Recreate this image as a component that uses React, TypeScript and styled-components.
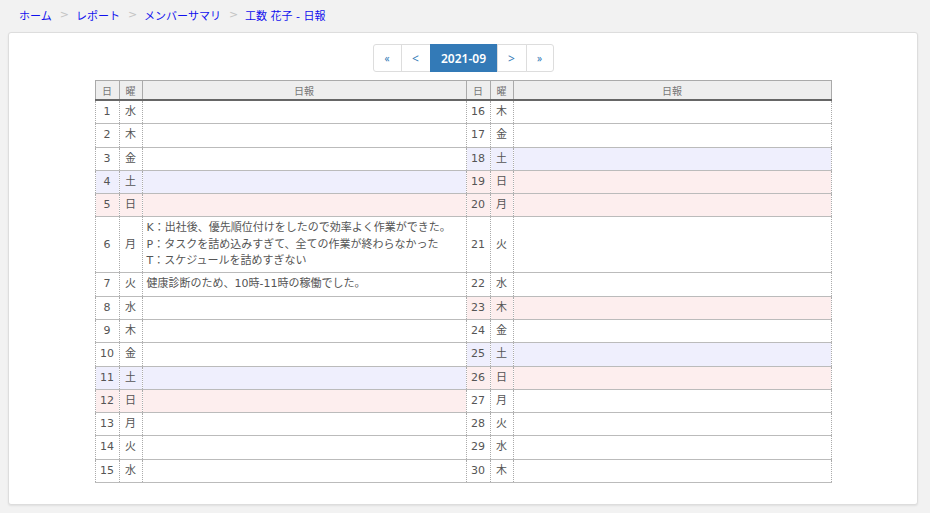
import styled, { createGlobalStyle } from "styled-components";

const GlobalStyle = createGlobalStyle`
  html, body {
    margin: 0;
    padding: 0;
    background: #f2f2f2;
    font-family: "DejaVu Sans", "Noto Sans CJK JP", sans-serif;
    font-size: 11px;
    color: #555;
  }
`;

const Page = styled.div`
  padding: 5px 12px 8px 8px;
`;

const Breadcrumb = styled.ol`
  display: flex;
  align-items: center;
  list-style: none;
  margin: 0 0 8px;
  padding: 0 0 0 11px;
  height: 19px;
  font-family: "DejaVu Sans", "Noto Sans CJK JP", sans-serif;
  font-size: 11px;
`;

const Crumb = styled.li`
  display: flex;
  align-items: center;
  white-space: pre;

  & + &::before {
    content: ">";
    color: #c4c4c4;
    padding: 0 7px 0 8px;
    font-size: 11px;
  }
`;

const CrumbLink = styled.a`
  color: #1010ee;
  text-decoration: none;
`;

const Card = styled.div`
  background: #fff;
  border: 1px solid #ddd;
  border-radius: 3px;
  box-shadow: 0 1px 2px rgba(0, 0, 0, 0.08);
  padding: 11px 0 21px;
  display: flex;
  flex-direction: column;
  align-items: center;
`;

const Pager = styled.div`
  display: flex;
  margin-bottom: 8px;
`;

const PageButton = styled.a<{ $active?: boolean; $w: number; $small?: boolean }>`
  box-sizing: border-box;
  display: flex;
  align-items: center;
  justify-content: center;
  height: 28px;
  width: ${(p) => p.$w}px;
  border: 1px solid ${(p) => (p.$active ? "#337ab7" : "#ddd")};
  margin-left: -1px;
  background: ${(p) => (p.$active ? "#337ab7" : "#fff")};
  color: ${(p) => (p.$active ? "#fff" : "#337ab7")};
  font-size: ${(p) => (p.$small ? "10px" : "12px")};
  font-weight: ${(p) => (p.$active ? 600 : 400)};
  font-family: "Noto Sans", "DejaVu Sans", sans-serif;
  cursor: pointer;

  &:first-child {
    margin-left: 0;
    border-radius: 3px 0 0 3px;
  }
  &:last-child {
    border-radius: 0 3px 3px 0;
  }
`;

const Table = styled.table`
  width: 737px;
  border-collapse: collapse;
  table-layout: fixed;
  border-left: 1px dotted #aaa;
  border-right: 1px dotted #aaa;
`;

const HeadCell = styled.th<{ $w?: number }>`
  width: ${(p) => (p.$w ? `${p.$w}px` : "auto")};
  background: #eee;
  border: 1px solid #aaa;
  border-bottom: 2px solid #666;
  font-weight: normal;
  font-size: 10px;
  color: #777;
  height: 18px;
  padding: 0;
  font-family: "Noto Sans CJK JP", sans-serif;
`;

type Tone = "plain" | "sat" | "holiday";

const Row = styled.tr`
  border-top: 1px solid #bbb;
  border-bottom: 1px solid #bbb;
`;

const Cell = styled.td<{ $tone: Tone; $center?: boolean }>`
  background: ${(p) =>
    p.$tone === "sat" ? "#efeffd" : p.$tone === "holiday" ? "#fdeeee" : "#fff"};
  border-left: 1px dotted #aaa;
  border-right: 1px dotted #aaa;
  padding: 3px 4px;
  line-height: 16.3px;
  text-align: ${(p) => (p.$center ? "center" : "left")};
  vertical-align: middle;
  color: #555;
  overflow: hidden;
`;

const Note = styled.div`
  white-space: nowrap;
`;

const weekdays = ["日", "月", "火", "水", "木", "金", "土"];
const holidays = [20, 23];

const notes: Record<number, string[]> = {
  6: [
    "K：出社後、優先順位付けをしたので効率よく作業ができた。",
    "P：タスクを詰め込みすぎて、全ての作業が終わらなかった",
    "T：スケジュールを詰めすぎない",
  ],
  7: ["健康診断のため、10時-11時の稼働でした。"],
};

const dayInfo = (day: number) => {
  const wd = new Date(2021, 8, day).getDay();
  let tone: Tone = "plain";
  if (wd === 6) tone = "sat";
  if (wd === 0 || holidays.includes(day)) tone = "holiday";
  return { label: weekdays[wd], tone };
};

const DayCells = ({ day }: { day: number }) => {
  const { label, tone } = dayInfo(day);
  return (
    <>
      <Cell $tone={tone} $center>
        {day}
      </Cell>
      <Cell $tone={tone} $center>
        {label}
      </Cell>
      <Cell $tone={tone}>
        {(notes[day] || []).map((line) => (
          <Note key={line}>{line}</Note>
        ))}
      </Cell>
    </>
  );
};

const crumbs = ["ホーム", "レポート", "メンバーサマリ", "工数 花子 - 日報"];

export default function App() {
  const rows = Array.from({ length: 15 }, (_, i) => i + 1);
  return (
    <>
      <GlobalStyle />
      <Page>
        <Breadcrumb>
          {crumbs.map((c) => (
            <Crumb key={c}>
              <CrumbLink>{c}</CrumbLink>
            </Crumb>
          ))}
        </Breadcrumb>
        <Card>
          <Pager>
            <PageButton $w={29} $small>«</PageButton>
            <PageButton $w={30}>&lt;</PageButton>
            <PageButton $w={68} $active>
              2021-09
            </PageButton>
            <PageButton $w={30}>&gt;</PageButton>
            <PageButton $w={28} $small>»</PageButton>
          </Pager>
          <Table>
            <thead>
              <tr>
                <HeadCell $w={23}>日</HeadCell>
                <HeadCell $w={22}>曜</HeadCell>
                <HeadCell $w={323}>日報</HeadCell>
                <HeadCell $w={23}>日</HeadCell>
                <HeadCell $w={22}>曜</HeadCell>
                <HeadCell>日報</HeadCell>
              </tr>
            </thead>
            <tbody>
              {rows.map((d) => (
                <Row key={d}>
                  <DayCells day={d} />
                  <DayCells day={d + 15} />
                </Row>
              ))}
            </tbody>
          </Table>
        </Card>
      </Page>
    </>
  );
}
